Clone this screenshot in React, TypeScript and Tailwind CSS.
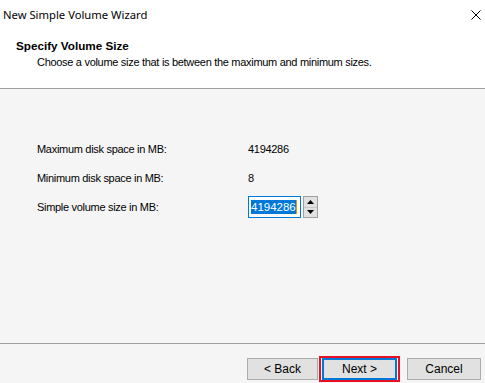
import React from "react";

const SpinArrow = ({ up }: { up: boolean }) => (
  <svg width="7" height="4" viewBox="0 0 7 4" className="block">
    {up ? <polygon points="3.5,0 7,4 0,4" fill="#000" /> : <polygon points="0,0 7,0 3.5,4" fill="#000" />}
  </svg>
);

const WinButton = ({ label, width, focused }: { label: string; width: string; focused?: boolean }) => (
  <div className={focused ? "-mt-[2px] border-2 border-[#e81123] px-px" : ""}>
    <div
      className={`flex h-[22px] items-center justify-center bg-[#e1e1e1] text-[12px] text-black ${width} ${
        focused ? "border-2 border-[#0078d7]" : "border border-[#adadad]"
      }`}
    >
      {label}
    </div>
  </div>
);

export default function App() {
  return (
    <div
      className="flex h-[383px] w-[485px] flex-col overflow-hidden bg-white text-black"
      style={{ fontFamily: '"Liberation Sans", Arial, sans-serif' }}
    >
      {/* Title bar */}
      <div className="flex h-[30px] items-center justify-between pl-[3px] pr-[4px]">
        <span className="font-['Noto_Sans',sans-serif] text-[11.25px] text-black">New Simple Volume Wizard</span>
        <svg width="10" height="10" viewBox="0 0 10 10">
          <path d="M0.5 0.5 L9.5 9.5 M9.5 0.5 L0.5 9.5" stroke="#000" strokeWidth="1" />
        </svg>
      </div>

      {/* Header */}
      <div className="h-[59px] shrink-0 border-b border-[#a0a0a0] pt-[9px]">
        <div className="pl-[16px] text-[11.7px] font-bold leading-[14px]">Specify Volume Size</div>
        <div className="pl-[37px] pt-[2px] text-[11px] leading-[14px] tracking-[-0.3px]">
          Choose a volume size that is between the maximum and minimum sizes.
        </div>
      </div>

      {/* Content */}
      <div className="flex-1 border-b border-[#a0a0a0] bg-[#f5f5f5] pl-[37px] pt-[53px] text-[11px] tracking-[-0.3px]">
        <div className="grid grid-cols-[211px_auto] gap-y-[15px]">
          <div className="leading-[14px]">Maximum disk space in MB:</div>
          <div className="leading-[14px]">4194286</div>
          <div className="leading-[14px]">Minimum disk space in MB:</div>
          <div className="leading-[14px]">8</div>
          <div className="leading-[14px]">Simple volume size in MB:</div>
          <div className="-mt-[4px] flex items-start gap-[2px]">
            <div className="flex h-[22px] w-[53px] items-center border border-[#0078d7] bg-white pl-[2px]">
              <span className="bg-[#0078d7] text-[11.5px] leading-[14px] tracking-normal text-white">4194286</span>
              <span className="h-[14px] w-px bg-[#ff8c00]" />
            </div>
            <div className="flex h-[22px] w-[15px] flex-col border border-[#a0a0a0] bg-[#f0f0f0]">
              <div className="flex flex-1 items-center justify-center border-b border-[#c8c8c8] bg-[#e1e1e1]">
                <SpinArrow up />
              </div>
              <div className="flex flex-1 items-center justify-center bg-[#e1e1e1]">
                <SpinArrow up={false} />
              </div>
            </div>
          </div>
        </div>
      </div>

      {/* Footer */}
      <div className="flex h-[39px] shrink-0 items-start bg-[#f5f5f5] pl-[247px] pt-[14px]">
        <WinButton label="< Back" width="w-[71px]" />
        <div className="ml-px">
          <WinButton label="Next >" width="w-[75px]" focused />
        </div>
        <div className="ml-[7px]">
          <WinButton label="Cancel" width="w-[74px]" />
        </div>
      </div>
    </div>
  );
}
